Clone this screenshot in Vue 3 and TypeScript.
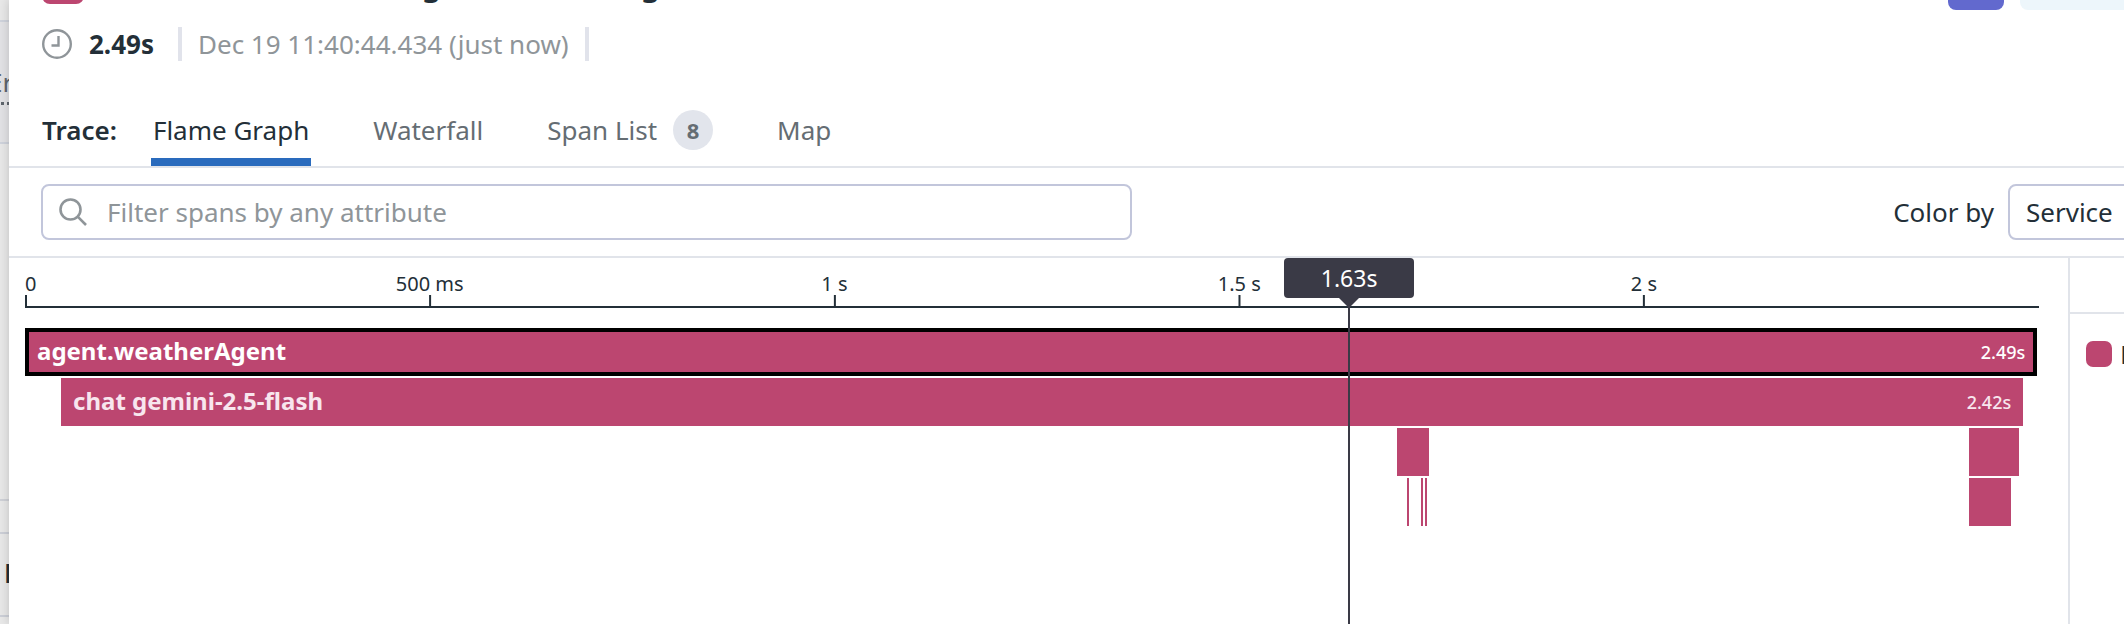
<script setup lang="ts">
import { ref } from 'vue'

interface Span {
  name?: string
  start: number
  duration: number
  label?: string
  selected?: boolean
}

const total = 2488
const pct = (ms: number): string => `${(ms / total) * 100}%`

const tabs = [
  { id: 'flame', label: 'Flame Graph' },
  { id: 'waterfall', label: 'Waterfall' },
  { id: 'list', label: 'Span List', count: 8 },
  { id: 'map', label: 'Map' },
]
const activeTab = ref('flame')
const filter = ref('')
const colorBy = ref('Service')

const ticks = [
  { at: 0, label: '0' },
  { at: 500, label: '500 ms' },
  { at: 1000, label: '1 s' },
  { at: 1500, label: '1.5 s' },
  { at: 2000, label: '2 s' },
]

const rows: Span[][] = [
  [{ name: 'agent.weatherAgent', start: 0, duration: 2486, label: '2.49s', selected: true }],
  [{ name: 'chat gemini-2.5-flash', start: 44.5, duration: 2424, label: '2.42s' }],
  [
    { start: 1695, duration: 39.5 },
    { start: 2401.5, duration: 61.8 },
  ],
  [
    { start: 1707.3, duration: 2 },
    { start: 1724.6, duration: 2 },
    { start: 1729.5, duration: 2 },
    { start: 2401.5, duration: 51.9 },
  ],
]
const cursor = 1634.5
</script>

<template>
  <div class="page">
    <aside class="backdrop">
      <div class="back-top"></div>
      <div class="back-head"><span class="back-term">Er</span></div>
      <div class="back-body"></div>
      <div class="back-row"></div>
      <div class="back-name"><b>N</b></div>
    </aside>

    <main class="panel">
      <header class="title-row">
        <span class="service-chip"></span>
        <h1 class="title"><span>g</span><span>g</span></h1>
        <div class="actions">
          <button class="action primary" type="button" aria-label="Open"></button>
          <button class="action soft" type="button" aria-label="Share"></button>
        </div>
      </header>

      <div class="meta">
        <svg class="clock" viewBox="0 0 30 30" aria-hidden="true">
          <circle cx="15" cy="15" r="13.8" />
          <path d="M16.5 7v9.5H9.5" />
        </svg>
        <strong class="duration">2.49s</strong>
        <span class="divider"></span>
        <span class="stamp">Dec 19 11:40:44.434 (just now)</span>
        <span class="divider"></span>
      </div>

      <nav class="tabs">
        <span class="tabs-title">Trace:</span>
        <button
          v-for="tab in tabs"
          :key="tab.id"
          type="button"
          class="tab"
          :class="{ active: tab.id === activeTab }"
          @click="activeTab = tab.id"
        >
          {{ tab.label }}<span v-if="tab.count" class="badge">{{ tab.count }}</span>
        </button>
      </nav>

      <div class="toolbar">
        <label class="search">
          <svg class="glass" viewBox="0 0 28 28" aria-hidden="true">
            <circle cx="11.5" cy="11.5" r="10" />
            <path d="M18.7 18.7L27 27" />
          </svg>
          <input v-model="filter" type="text" placeholder="Filter spans by any attribute" aria-label="Filter spans" />
        </label>
        <div class="color-by">
          <label for="color-by">Color by</label>
          <select id="color-by" v-model="colorBy">
            <option>Service</option>
          </select>
        </div>
      </div>

      <div class="content">
        <section class="chart">
          <div class="plot">
            <div class="axis">
              <div
                v-for="tick in ticks"
                :key="tick.at"
                class="tick"
                :class="{ first: tick.at === 0 }"
                :style="{ left: pct(tick.at) }"
              >
                <span class="tick-label">{{ tick.label }}</span>
                <span class="tick-mark"></span>
              </div>
            </div>
            <div class="rows">
              <div v-for="(row, i) in rows" :key="i" class="row">
                <div
                  v-for="span in row"
                  :key="span.start"
                  class="span"
                  :class="{ selected: span.selected }"
                  :style="{ left: pct(span.start), width: pct(span.duration) }"
                >
                  <template v-if="span.name">
                    <span class="span-name">{{ span.name }}</span>
                    <span class="span-time">{{ span.label }}</span>
                  </template>
                </div>
              </div>
            </div>
            <div class="cursor" :style="{ left: pct(cursor) }">
              <span class="tooltip">1.63s</span>
              <span class="arrow"></span>
            </div>
          </div>
        </section>
        <aside class="legend">
          <div class="legend-head"></div>
          <div class="legend-item"><span class="swatch"></span><span>E</span></div>
        </aside>
      </div>
    </main>
  </div>
</template>

<style>
body {
  margin: 0;
}
</style>

<style scoped>
.page {
  display: flex;
  height: 100vh;
  overflow: hidden;
  background: #e8e8e8;
  color: #232f38;
  font: 26px/36px "Noto Sans", sans-serif;
}
.page * {
  box-sizing: border-box;
}
.backdrop {
  flex: 0 0 9px;
  display: flex;
  flex-direction: column;
  overflow: hidden;
}
.back-top {
  flex: 0 0 20px;
}
.back-head {
  flex: 0 0 124px;
  padding-top: 43px;
  border-top: 2px solid #cfd3dc;
  border-bottom: 2px solid #cfd3dc;
  background: #e2e2e5;
  color: #5f666d;
}
.back-term {
  display: block;
  width: 28px;
  height: 40px;
  margin-left: -12px;
  border-bottom: 3px dotted #5f666d;
  line-height: 34px;
}
.back-body {
  flex: 0 0 357px;
  border-bottom: 2px dashed #cfd1d7;
}
.back-row {
  flex: 0 0 33px;
  border-bottom: 2px solid #cccfd7;
}
.back-name {
  flex: 0 0 83px;
  padding: 21px 0 0 4px;
  border-bottom: 2px solid #cccfd7;
}
.panel {
  position: relative;
  flex: 1;
  min-width: 0;
  display: flex;
  flex-direction: column;
  overflow: hidden;
  background: #fff;
  box-shadow: 0 0 10px rgba(0, 0, 0, 0.18);
}
.title-row {
  display: flex;
  align-items: flex-end;
  height: 10px;
  padding-left: 33px;
}
.service-chip {
  width: 42px;
  height: 42px;
  margin-bottom: 6px;
  border-radius: 8px;
  background: #bc4670;
}
.title {
  display: flex;
  gap: 200px;
  margin: 0 0 7px 338px;
  font-size: 30px;
  line-height: 36px;
}
.actions {
  display: flex;
  gap: 16px;
  margin-left: auto;
}
.action {
  width: 56px;
  height: 56px;
  padding: 0;
  border: 0;
  border-radius: 8px;
}
.primary {
  background: #6269ce;
}
.soft {
  width: 104px;
  border-radius: 8px 0 0 8px;
  background: #edf6fb;
}
.meta {
  display: flex;
  align-items: center;
  height: 68px;
  padding-left: 33px;
}
.clock {
  width: 30px;
  height: 30px;
  margin-right: 17px;
  fill: none;
  stroke: #8f9599;
  stroke-width: 2.4;
}
.duration {
  margin-right: 24px;
}
.divider {
  width: 4px;
  height: 34px;
  background: #e1e3eb;
}
.stamp {
  margin: 0 16px;
  color: #8f9599;
}
.tabs {
  display: flex;
  align-items: stretch;
  height: 90px;
  padding-left: 33px;
  border-bottom: 2px solid #e1e4ea;
}
.tabs-title {
  margin-right: 34px;
  padding-top: 34px;
  font-weight: 600;
}
.tab {
  display: flex;
  align-items: center;
  gap: 16px;
  margin-right: 60px;
  padding: 24px 2px 0;
  border: 0;
  border-bottom: 8px solid transparent;
  background: none;
  color: #656d73;
  font: inherit;
}
.tab.active {
  border-bottom-color: #2a6bbd;
  color: #232f38;
}
.badge {
  width: 40px;
  height: 40px;
  border-radius: 50%;
  background: #e2e5ec;
  font-size: 22px;
  font-weight: 700;
  line-height: 40px;
}
.toolbar {
  display: flex;
  align-items: center;
  justify-content: space-between;
  height: 90px;
  padding-left: 32px;
  border-bottom: 2px solid #e1e4ea;
}
.search {
  display: flex;
  align-items: center;
  flex: 0 1 1091px;
  height: 56px;
  padding-left: 16px;
  border: 2px solid #c2c6db;
  border-radius: 8px;
}
.glass {
  width: 28px;
  height: 28px;
  margin-right: 20px;
  fill: none;
  stroke: #8f9599;
  stroke-width: 2.6;
}
.search input {
  flex: 1;
  min-width: 0;
  padding: 0;
  border: 0;
  outline: 0;
  background: none;
  color: inherit;
  font: inherit;
}
.search input::placeholder {
  color: #8f9599;
  opacity: 1;
}
.color-by {
  display: flex;
  align-items: center;
  gap: 14px;
  margin-right: -44px;
}
.color-by select {
  appearance: none;
  width: 160px;
  height: 56px;
  padding: 0 16px;
  border: 2px solid #c2c6db;
  border-radius: 8px;
  background: #fff;
  color: inherit;
  font: inherit;
}
.content {
  flex: 1;
  display: flex;
  min-height: 360px;
}
.chart {
  flex: 1;
  padding: 0 29px 0 16px;
}
.plot {
  position: relative;
  height: 100%;
}
.axis {
  position: relative;
  height: 50px;
  border-bottom: 2px solid #232f38;
}
.tick {
  position: absolute;
  bottom: 0;
  display: flex;
  flex-direction: column;
  align-items: center;
  transform: translateX(-50%);
  font-size: 20px;
  line-height: 22px;
  white-space: nowrap;
}
.tick.first {
  align-items: flex-start;
  transform: none;
}
.tick-mark {
  width: 2px;
  height: 11px;
  background: #232f38;
}
.rows {
  display: flex;
  flex-direction: column;
  gap: 2px;
  padding-top: 20px;
}
.row {
  position: relative;
  height: 48px;
}
.span {
  position: absolute;
  top: 0;
  height: 48px;
  display: flex;
  align-items: center;
  justify-content: space-between;
  background: #bc4670;
  color: #f8e6ee;
}
.span.selected {
  border: 4px solid #000;
  color: #fff;
}
.span-name {
  padding: 0 0 2px 12px;
  font-size: 24px;
  font-weight: 700;
}
.span-time {
  padding-right: 12px;
  font-size: 18px;
  font-weight: 500;
}
.selected .span-name {
  padding-left: 8px;
}
.selected .span-time {
  padding-right: 8px;
}
.cursor {
  position: absolute;
  top: 0;
  bottom: 0;
  width: 2px;
  display: flex;
  flex-direction: column;
  align-items: center;
  background: #3a3a46;
}
.tooltip {
  flex: 0 0 40px;
  width: 130px;
  border-radius: 4px;
  background: #3a3a46;
  color: #fff;
  font-size: 23px;
  line-height: 40px;
  text-align: center;
}
.arrow {
  border: 10px solid transparent;
  border-top-color: #3a3a46;
  border-bottom: 0;
}
.legend {
  flex: 0 0 56px;
  overflow: hidden;
  border-left: 2px solid #e1e4ea;
}
.legend-head {
  height: 56px;
  border-bottom: 2px solid #e1e4ea;
}
.legend-item {
  display: flex;
  align-items: center;
  gap: 8px;
  padding: 22px 0 0 16px;
}
.swatch {
  flex: 0 0 26px;
  height: 26px;
  border-radius: 7px;
  background: #bc4670;
}
</style>
